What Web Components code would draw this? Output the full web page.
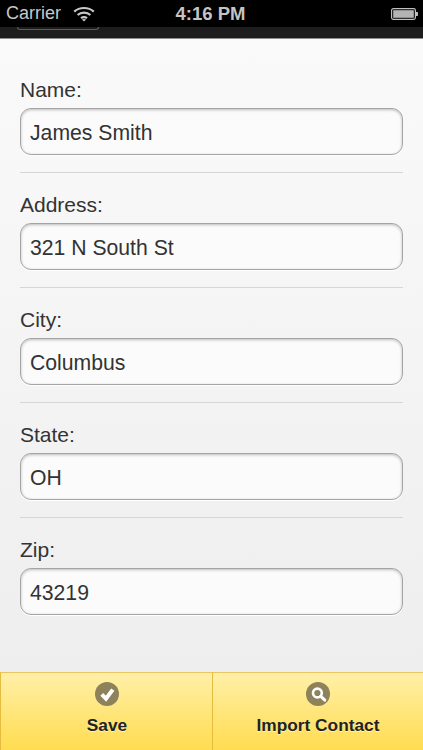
<!DOCTYPE html>
<html>
<head>
<meta charset="utf-8">
<title>Contact</title>
<style>
  html, body { margin: 0; padding: 0; height: 100%; }
  body { font-family: "Liberation Sans", Arial, sans-serif; color: #333; overflow: hidden; }
  contact-screen { height: 750px; }
</style>
</head>
<body>
<contact-screen>
  <status-bar slot="status"></status-bar>
  <form-field label="Name:" value="James Smith"></form-field>
  <form-field label="Address:" value="321 N South St"></form-field>
  <form-field label="City:" value="Columbus"></form-field>
  <form-field label="State:" value="OH"></form-field>
  <form-field label="Zip:" value="43219" last></form-field>
  <footer-button slot="footer" icon="check">Save</footer-button>
  <footer-button slot="footer" icon="search">Import Contact</footer-button>
</contact-screen>

<script>
class ContactScreen extends HTMLElement {
  constructor() {
    super();
    this.attachShadow({ mode: 'open' });
    this.shadowRoot.innerHTML = `
      <style>
        :host { display: flex; flex-direction: column; width: 423px; }
        .strip { height: 11px; background: #1d1d1d; border-bottom: 1px solid #8c8c8c; }
        .strip div { width: 82px; height: 3px; margin-left: 17px; box-sizing: border-box;
          border: 1px solid #5c5c5c; border-top: 0; border-radius: 0 0 8px 8px; }
        .content { flex: 1; padding: 39px 20px 0; background: linear-gradient(#fafafa, #eeeeee); }
        .footer { display: flex; height: 78px; }
      </style>
      <slot name="status"></slot>
      <div class="strip"><div></div></div>
      <div class="content"><slot></slot></div>
      <div class="footer"><slot name="footer"></slot></div>
    `;
  }
}

class StatusBar extends HTMLElement {
  constructor() {
    super();
    this.attachShadow({ mode: 'open' });
    this.shadowRoot.innerHTML = `
      <style>
        :host { display: grid; grid-template-columns: 1fr auto 1fr; align-items: center; height: 27px;
          background: #000; color: #c8c8c8; font: 18px "Liberation Sans", Arial, sans-serif; }
        .left { display: flex; align-items: center; gap: 12px; padding-left: 6px; }
        .time { font-weight: bold; font-size: 18.5px; color: #c4c4c4; margin-right: 2px; }
        .right { display: flex; justify-content: flex-end; padding-right: 5px; }
        svg { display: block; }
      </style>
      <div class="left">
        <span>Carrier</span>
        <svg width="22" height="16" viewBox="0 0 22 16" fill="none" stroke="#c8c8c8" stroke-width="2.2">
          <path d="M1.2 5.6C6.6 .8 15.4 .8 20.8 5.6"/>
          <path d="M4.6 9C8.2 5.9 13.8 5.9 17.4 9"/>
          <path d="M8 12.2C9.7 10.9 12.3 10.9 14 12.2"/>
          <path d="M11 15.6L8.9 13.5C10.2 12.7 11.8 12.7 13.1 13.5Z" fill="#c8c8c8" stroke="none"/>
        </svg>
      </div>
      <span class="time">4:16 PM</span>
      <div class="right">
        <svg width="27" height="12" viewBox="0 0 27 12">
          <rect x=".6" y=".6" width="23.8" height="10.8" rx="1.8" fill="none" stroke="#c0c0c0" stroke-width="1.2"/>
          <rect x="2.2" y="2.2" width="20.6" height="7.6" fill="#b4b4b4"/>
          <path d="M25 4h1.2q.8 0 .8 .8v2.4q0 .8-.8 .8H25z" fill="#c0c0c0"/>
        </svg>
      </div>
    `;
  }
}

class FormField extends HTMLElement {
  constructor() {
    super();
    this.attachShadow({ mode: 'open' });
  }

  connectedCallback() {
    this.shadowRoot.innerHTML = `
      <style>
        :host { display: block; padding-bottom: 17px; margin-bottom: 20px; border-bottom: 1px solid #d6d6d6; }
        :host([last]) { border-bottom: 0; margin-bottom: 0; }
        label { display: block; height: 22px; line-height: 24px; margin-bottom: 8px; font-size: 21px; color: #333; }
        .input { box-sizing: border-box; height: 47px; line-height: 48px; padding: 0 9px; font-size: 21.2px; color: #333;
          background: #fbfbfb; border: 1.5px solid #a4a4a4; border-radius: 11px;
          box-shadow: inset 0 1px 3px rgba(0,0,0,.25), 0 1px 0 #fff; }
      </style>
      <label>${this.getAttribute('label')}</label>
      <div class="input">${this.getAttribute('value')}</div>
    `;
  }
}

const footerIcons = {
  check: '<path d="M6.8 12.4l4.2 4.2 6.8-9" fill="none" stroke="#fff" stroke-width="4"/>',
  search: '<circle cx="11.4" cy="11" r="4.4" fill="none" stroke="#fff" stroke-width="2.6"/><path d="M14.8 14.4l4 3.8" stroke="#fff" stroke-width="3" stroke-linecap="round"/>'
};

class FooterButton extends HTMLElement {
  constructor() {
    super();
    this.attachShadow({ mode: 'open' });
  }

  connectedCallback() {
    this.shadowRoot.innerHTML = `
      <style>
        :host { display: flex; flex: 1; flex-direction: column; align-items: center; box-sizing: border-box;
          padding-top: 9px; background: linear-gradient(#fff0a8, #ffdc50);
          border-top: 1px solid #eec45e; border-left: 1px solid #e5bb40;
          font: bold 17.3px "Liberation Sans", Arial, sans-serif; color: #222; text-shadow: 0 1px 0 #fff3c0; }
        :host([icon="check"]) { padding-left: 1px; }
        svg { display: block; }
        .label { margin-top: 8px; line-height: 22px; }
      </style>
      <svg width="24" height="24" viewBox="0 0 24 24">
        <circle cx="12" cy="12" r="12" fill="#8d8259"/>
        ${footerIcons[this.getAttribute('icon')]}
      </svg>
      <div class="label"><slot></slot></div>
    `;
  }
}

customElements.define('contact-screen', ContactScreen);
customElements.define('status-bar', StatusBar);
customElements.define('form-field', FormField);
customElements.define('footer-button', FooterButton);
</script>
</body>
</html>
